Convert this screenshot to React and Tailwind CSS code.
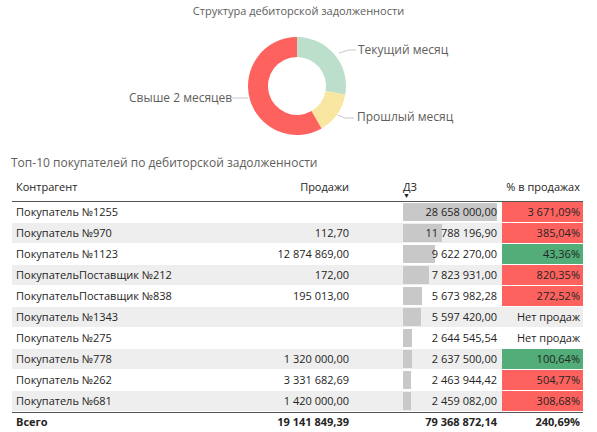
import React from 'react';

const rows = [
  { name: 'Покупатель №1255', sales: '', debt: '28 658 000,00', v: 28658000, pct: '3 671,09%', c: 'red' },
  { name: 'Покупатель №970', sales: '112,70', debt: '11 788 196,90', v: 11788196, pct: '385,04%', c: 'red' },
  { name: 'Покупатель №1123', sales: '12 874 869,00', debt: '9 622 270,00', v: 9622270, pct: '43,36%', c: 'green' },
  { name: 'ПокупательПоставщик №212', sales: '172,00', debt: '7 823 931,00', v: 7823931, pct: '820,35%', c: 'red' },
  { name: 'ПокупательПоставщик №838', sales: '195 013,00', debt: '5 673 982,28', v: 5673982, pct: '272,52%', c: 'red' },
  { name: 'Покупатель №1343', sales: '', debt: '5 597 420,00', v: 5597420, pct: 'Нет продаж', c: '' },
  { name: 'Покупатель №275', sales: '', debt: '2 644 545,54', v: 2644545, pct: 'Нет продаж', c: '' },
  { name: 'Покупатель №778', sales: '1 320 000,00', debt: '2 637 500,00', v: 2637500, pct: '100,64%', c: 'green' },
  { name: 'Покупатель №262', sales: '3 331 682,69', debt: '2 463 944,42', v: 2463944, pct: '504,77%', c: 'red' },
  { name: 'Покупатель №681', sales: '1 420 000,00', debt: '2 459 082,00', v: 2459082, pct: '308,68%', c: 'red' },
];

function arc(cx, cy, R, r, a0, a1) {
  const p = (rad, a) => {
    const t = ((a - 90) * Math.PI) / 180;
    return `${cx + rad * Math.cos(t)} ${cy + rad * Math.sin(t)}`;
  };
  const large = a1 - a0 > 180 ? 1 : 0;
  return `M ${p(R, a0)} A ${R} ${R} 0 ${large} 1 ${p(R, a1)} L ${p(r, a1)} A ${r} ${r} 0 ${large} 0 ${p(r, a0)} Z`;
}

function Donut() {
  return (
    <svg width="597" height="150" className="absolute left-0 top-0">
      <path d={arc(297, 86, 49, 29, 0, 100)} fill="#bbdfca" />
      <path d={arc(297, 86, 49, 29, 100, 150)} fill="#f9e6a0" />
      <path d={arc(297, 86, 49, 29, 150, 360)} fill="#fd625e" />
      <polyline points="339,53 349,50 356,50" fill="none" stroke="#c8c8c8" />
      <polyline points="338,115 345,118 354,118" fill="none" stroke="#c8c8c8" />
      <polyline points="248,98 240,98 232,98" fill="none" stroke="#c8c8c8" />
    </svg>
  );
}

export default function App() {
  const max = 28658000;
  return (
    <div className="relative w-[597px] h-[432px] bg-white overflow-hidden text-[#252423]" style={{ fontFamily: '"Open Sans", "Noto Sans", sans-serif' }}>
      <div className="relative h-[150px]">
        <Donut />
        <div className="absolute left-0 right-0 top-[3px] text-center text-[11px] text-[#605e5c]">Структура дебиторской задолженности</div>
        <div className="absolute left-[358px] top-[41px] text-[12px] text-[#605e5c]">Текущий месяц</div>
        <div className="absolute left-[357px] top-[108px] text-[12px] text-[#605e5c]">Прошлый месяц</div>
        <div className="absolute left-[129px] top-[89px] text-[12px] text-[#605e5c]">Свыше 2 месяцев</div>
      </div>
      <div className="pl-[11px] text-[12px] text-[#605e5c] leading-[20px] mt-[3px]">Топ-10 покупателей по дебиторской задолженности</div>
      <div className="ml-[12px] w-[571px] text-[11px] whitespace-nowrap">
        <div className="flex h-[29px] items-center border-b border-[#555]">
          <div className="w-[269px] pl-[4px]">Контрагент</div>
          <div className="w-[68px] text-right">Продажи</div>
          <div className="w-[54px]"></div>
          <div className="relative w-[97px] leading-[14px]">ДЗ<span className="absolute left-0 top-[12px] text-[7px] leading-[7px]">▼</span></div>
          <div className="ml-[2px] w-[81px] text-right pr-[3px]">% в продажах</div>
        </div>
        {rows.map((r, i) => (
          <div key={i} className={`flex h-[21px] items-stretch border-b border-white ${i % 2 ? 'bg-[#eeeeee]' : 'bg-white'}`}>
            <div className="w-[269px] pl-[4px] flex items-center">{r.name}</div>
            <div className="w-[68px] flex items-center justify-end overflow-visible">{r.sales}</div>
            <div className="w-[54px]"></div>
            <div className="relative w-[97px] flex items-center justify-end pr-[3px] my-[1px]">
              <div className="absolute left-0 top-0 bottom-0 bg-[#c8c8c8]" style={{ width: `${(r.v / max) * 94}px` }} />
              <span className="relative">{r.debt}</span>
            </div>
            <div className={`ml-[2px] w-[81px] flex items-center justify-end pr-[3px] ${r.c === 'red' ? 'bg-[#fd625e]' : r.c === 'green' ? 'bg-[#52ad78]' : ''}`}>{r.pct}</div>
          </div>
        ))}
        <div className="flex h-[20px] items-center border-t border-[#555] font-bold">
          <div className="w-[269px] pl-[4px]">Всего</div>
          <div className="w-[68px] flex justify-end">19 141 849,39</div>
          <div className="w-[54px]"></div>
          <div className="w-[97px] text-right pr-[3px]">79 368 872,14</div>
          <div className="ml-[2px] w-[81px] text-right pr-[3px]">240,69%</div>
        </div>
      </div>
    </div>
  );
}
